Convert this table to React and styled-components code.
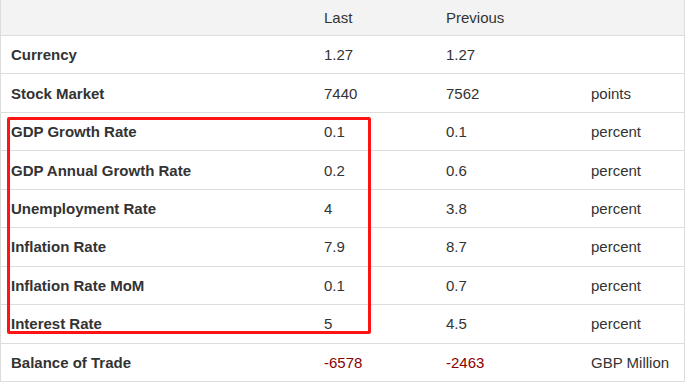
import React from 'react';
import styled, { createGlobalStyle } from 'styled-components';

const GlobalStyle = createGlobalStyle`
  body {
    margin: 0;
    background: #fff;
    font-family: 'Liberation Sans', Arial, sans-serif;
  }
`;

const Wrapper = styled.div`
  position: relative;
  width: 685px;
  box-sizing: border-box;
  border-left: 1px solid #ddd;
  border-right: 1px solid #ddd;
`;

const Row = styled.div`
  display: grid;
  grid-template-columns: 312px 122px 145px 1fr;
  align-items: center;
  height: ${(p) => (p.$head ? '35px' : '37.45px')};
  border-bottom: 1px solid #ddd;
  background: ${(p) => (p.$head ? '#f3f3f3' : '#fff')};
  font-size: 15px;
  color: #333;
`;

const Label = styled.div`
  padding-left: 10px;
  font-weight: bold;
  color: #333;
`;

const Cell = styled.div`
  padding-left: 11px;
  color: ${(p) => (p.$neg ? '#8b0000' : '#333')};
`;

const Highlight = styled.div`
  position: absolute;
  left: 6px;
  top: 117px;
  width: 364px;
  height: 217px;
  box-sizing: border-box;
  border: 3px solid #ff1414;
  border-radius: 2px;
  pointer-events: none;
`;

const rows = [
  ['Currency', '1.27', '1.27', ''],
  ['Stock Market', '7440', '7562', 'points'],
  ['GDP Growth Rate', '0.1', '0.1', 'percent'],
  ['GDP Annual Growth Rate', '0.2', '0.6', 'percent'],
  ['Unemployment Rate', '4', '3.8', 'percent'],
  ['Inflation Rate', '7.9', '8.7', 'percent'],
  ['Inflation Rate MoM', '0.1', '0.7', 'percent'],
  ['Interest Rate', '5', '4.5', 'percent'],
  ['Balance of Trade', '-6578', '-2463', 'GBP Million'],
];

const isNeg = (v) => v.startsWith('-');

export default function App() {
  return (
    <>
      <GlobalStyle />
      <Wrapper>
        <Row $head>
          <Label />
          <Cell>Last</Cell>
          <Cell>Previous</Cell>
          <Cell />
        </Row>
        {rows.map(([name, last, prev, unit]) => (
          <Row key={name}>
            <Label>{name}</Label>
            <Cell $neg={isNeg(last)}>{last}</Cell>
            <Cell $neg={isNeg(prev)}>{prev}</Cell>
            <Cell>{unit}</Cell>
          </Row>
        ))}
        <Highlight />
      </Wrapper>
    </>
  );
}
